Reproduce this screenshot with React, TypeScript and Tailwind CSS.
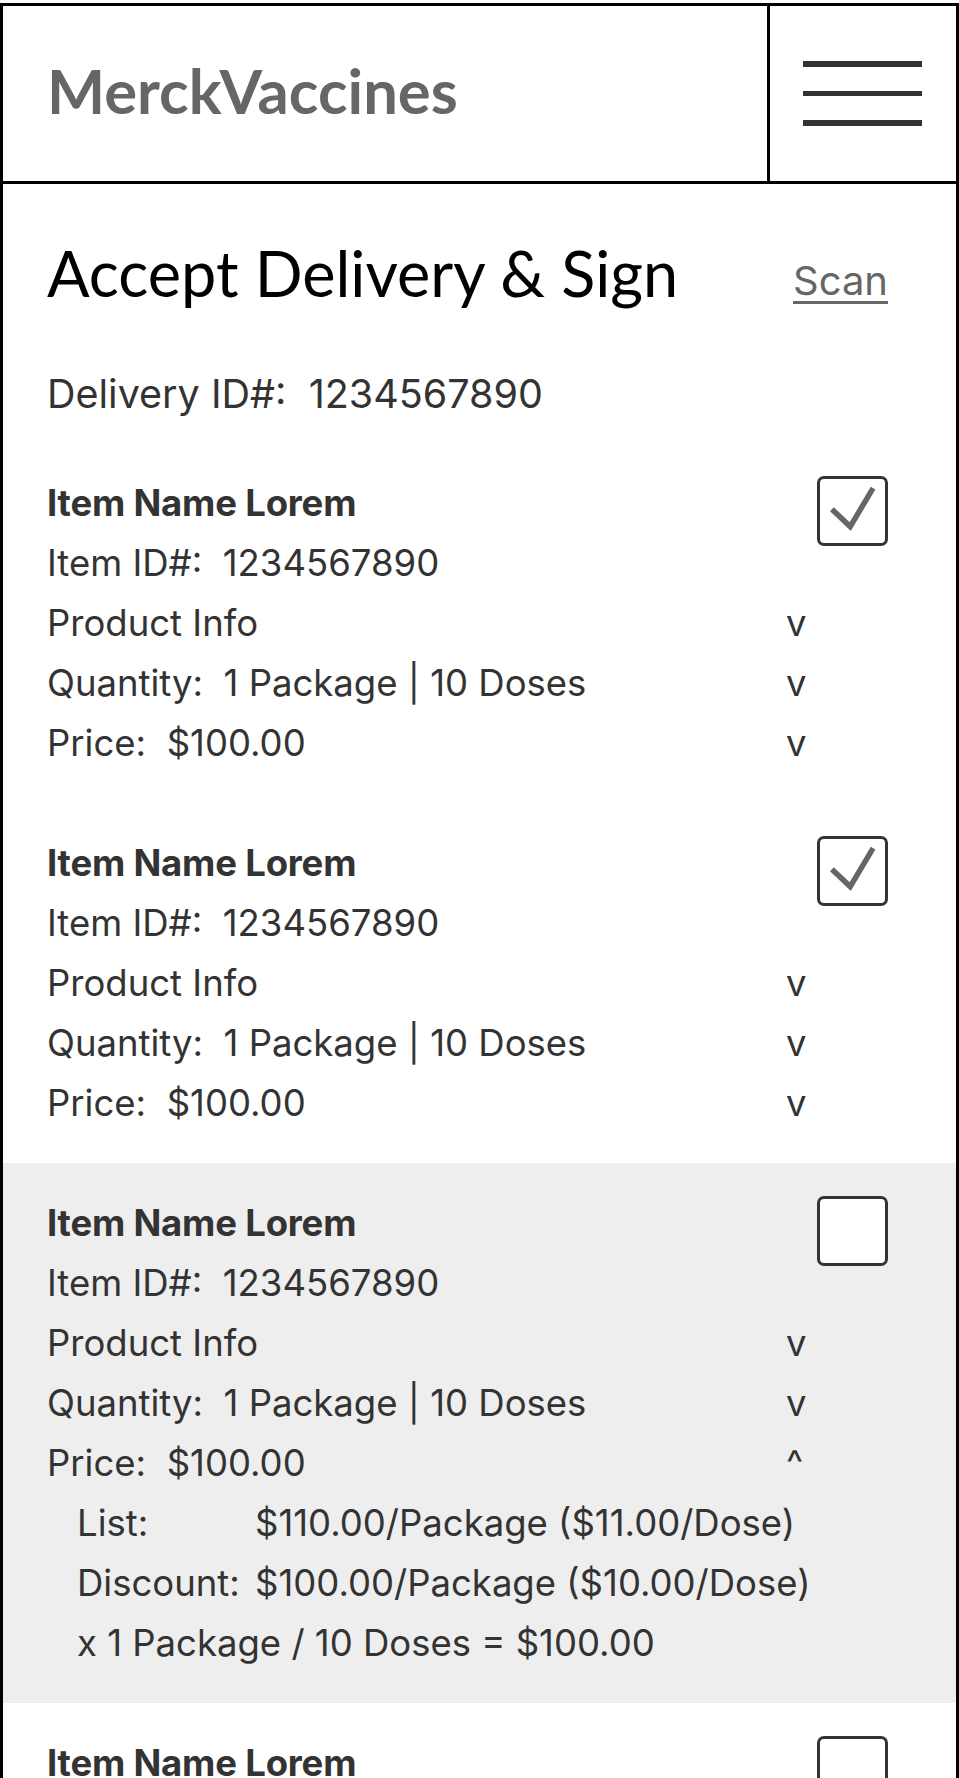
type Item = { checked: boolean; open?: boolean; shaded?: boolean }

const items: Item[] = [
  { checked: true },
  { checked: true },
  { checked: false, open: true, shaded: true },
  { checked: false },
]

const body = "font-['Inter',sans-serif] text-[#333333]"

function Checkbox({ checked }: { checked: boolean }) {
  return (
    <div className="mt-[3px] flex h-[70px] w-[71px] shrink-0 items-center justify-center rounded-[7px] border-[3px] border-[#333333] bg-white">
      {checked && (
        <svg width="71" height="70" viewBox="0 0 71 70" fill="none">
          <path d="M13 33 L33 52 L58 10" stroke="#666666" strokeWidth="6" />
        </svg>
      )}
    </div>
  )
}

function Row({ label, toggle }: { label: string; toggle?: string }) {
  return (
    <div className="flex h-[60px] items-center">
      <span className="flex-1 whitespace-pre">{label}</span>
      {toggle && <span className="w-[102px]">{toggle}</span>}
    </div>
  )
}

function ItemBlock({ item }: { item: Item }) {
  return (
    <div className={`pl-[44px] pr-[68px] py-[30px] ${item.shaded ? 'bg-[#eeeeee]' : ''}`}>
      <div className={`${body} text-[36.5px] leading-[60px]`}>
        <div className="flex h-[60px] items-start justify-between">
          <span className="font-bold tracking-[-0.2px] leading-[60px]">Item Name Lorem</span>
          <Checkbox checked={item.checked} />
        </div>
        <Row label="Item ID#:  1234567890" />
        <Row label="Product Info" toggle="v" />
        <Row label="Quantity:  1 Package | 10 Doses" toggle="v" />
        <Row label="Price:  $100.00" toggle={item.open ? '^' : 'v'} />
        {item.open && (
          <div className="pl-[30px]">
            <div className="flex h-[60px] items-center">
              <span className="w-[178px]">List:</span>
              <span>$110.00/Package ($11.00/Dose)</span>
            </div>
            <div className="flex h-[60px] items-center">
              <span className="w-[178px]">Discount:</span>
              <span>$100.00/Package ($10.00/Dose)</span>
            </div>
            <div className="h-[60px]">x 1 Package / 10 Doses = $100.00</div>
          </div>
        )}
      </div>
    </div>
  )
}

export default function App() {
  return (
    <div className="h-[1778px] w-[959px] overflow-hidden bg-white pt-[3px]">
      <div className="min-h-[1800px] border-[3px] border-black">
        <header className="flex h-[178px] border-b-[3px] border-black">
          <div className="flex flex-1 items-center pb-[6px] pl-[44px]">
            <span className="font-['Lato',sans-serif] text-[61.5px] font-bold text-[#666666]">
              MerckVaccines
            </span>
          </div>
          <button
            aria-label="Menu"
            className="flex w-[189px] flex-col justify-center gap-[24px] border-l-[3px] border-black pl-[33px]"
          >
            <span className="h-[5.5px] w-[119px] bg-[#333333]" />
            <span className="h-[5.5px] w-[119px] bg-[#333333]" />
            <span className="h-[5.5px] w-[119px] bg-[#333333]" />
          </button>
        </header>

        <main className="pt-[50px]">
          <div className="flex items-center justify-between pl-[44px] pr-[68px]">
            <h1 className="font-['Lato',sans-serif] text-[63px] leading-[77px] text-black">
              Accept Delivery &amp; Sign
            </h1>
            <a className="mt-[16px] font-['Inter',sans-serif] text-[40px] text-[#666666] underline decoration-[3px] underline-offset-[6px]">
              Scan
            </a>
          </div>
          <div className={`${body} mt-[53px] mb-[19px] h-[60px] whitespace-pre pl-[44px] text-[39.5px] leading-[60px]`}>
            Delivery ID#:  1234567890
          </div>
          {items.map((item, i) => (
            <ItemBlock key={i} item={item} />
          ))}
        </main>
      </div>
    </div>
  )
}
